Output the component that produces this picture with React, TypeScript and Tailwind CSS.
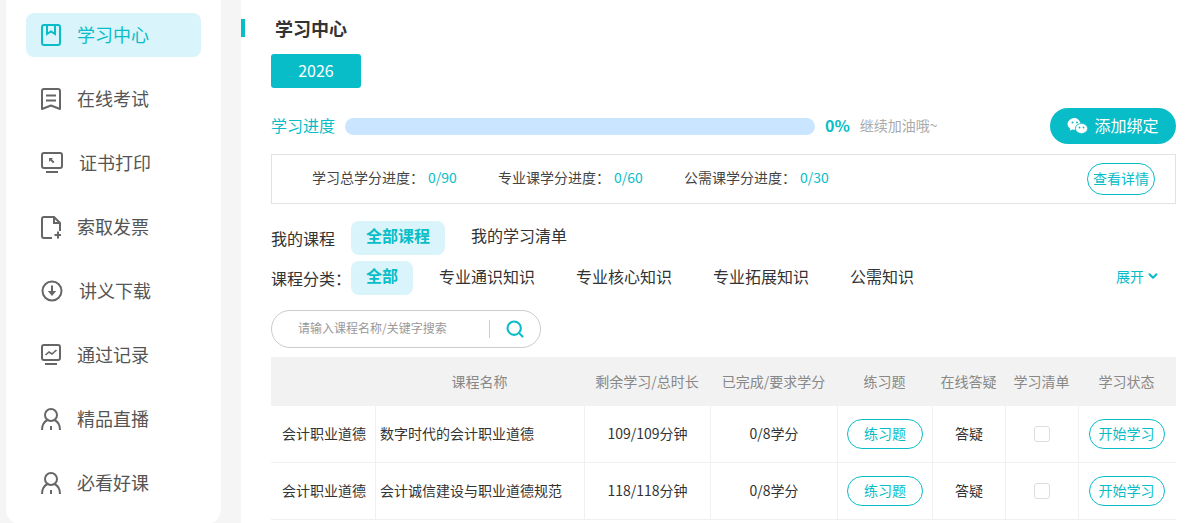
import type { ReactNode } from "react";
import { ChevronDown, Search } from "lucide-react";

const TEAL = "#08bdc8";

function Ico({ w = 20, children, color = "#666" }: { w?: number; children: ReactNode; color?: string }) {
  return (
    <svg width={w} height={24} viewBox={`0 0 ${w} 24`} fill="none" stroke={color} strokeWidth={2} className="shrink-0">
      {children}
    </svg>
  );
}

const person = (
  <Ico>
    <circle cx="10" cy="8" r="6" />
    <path d="M1 23c0-5 2.500-8.500 5.500-10M19 23c0-5-2.500-8.500-5.500-10M10 19v4" />
  </Ico>
);

const menu: { label: string; icon: ReactNode; active?: boolean }[] = [
  {
    label: "学习中心",
    active: true,
    icon: (
      <Ico color={TEAL}>
        <rect x="1" y="2" width="18" height="20" rx="2" />
        <path d="M6 2v9l4-2.500 4 2.500V2" />
      </Ico>
    ),
  },
  {
    label: "在线考试",
    icon: (
      <Ico>
        <path d="M3 2h14a2 2 0 0 1 2 2v18l-9-3.500L1 22V4a2 2 0 0 1 2-2z" strokeLinejoin="round" />
        <path d="M5 8.500h10M5 13.500h10" />
      </Ico>
    ),
  },
  {
    label: "证书打印",
    icon: (
      <Ico w={22}>
        <rect x="1" y="2" width="20" height="15" rx="2" />
        <path d="M5 21h12" />
        <path d="M8 7h4l-1.200 1.200L13.500 11l-1.500 1.300-2.600-2.700L8 11z" fill="#666" stroke="none" />
      </Ico>
    ),
  },
  {
    label: "索取发票",
    icon: (
      <Ico>
        <path d="M11 23H3a2 2 0 0 1-2-2V4a2 2 0 0 1 2-2h10l6 6v8" />
        <path d="M13 2v6h6" />
        <path d="M13.500 20h7M17 16.500v7" />
      </Ico>
    ),
  },
  {
    label: "讲义下载",
    icon: (
      <Ico w={22}>
        <circle cx="11" cy="12" r="9.500" />
        <path d="M11 6.500v7" />
        <path d="M6.800 12h8.400L11 17z" fill="#666" stroke="none" />
      </Ico>
    ),
  },
  {
    label: "通过记录",
    icon: (
      <Ico>
        <rect x="1" y="2" width="18" height="15" rx="2" />
        <path d="M4 21h12" />
        <path d="M4.500 12l3.500-3 3 2 4.500-4" strokeWidth={1.6} />
      </Ico>
    ),
  },
  { label: "精品直播", icon: person },
  { label: "必看好课", icon: person },
];

const credits = [
  { label: "学习总学分进度：", value: "0/90", width: "w-[186px]" },
  { label: "专业课学分进度：", value: "0/60", width: "w-[186px]" },
  { label: "公需课学分进度：", value: "0/30", width: "" },
];

const categories = ["专业通识知识", "专业核心知识", "专业拓展知识", "公需知识"];

const headers = ["", "课程名称", "剩余学习/总时长", "已完成/要求学分", "练习题", "在线答疑", "学习清单", "学习状态"];

const rows = [
  { type: "会计职业道德", name: "数字时代的会计职业道德", time: "109/109分钟", credit: "0/8学分" },
  { type: "会计职业道德", name: "会计诚信建设与职业道德规范", time: "118/118分钟", credit: "0/8学分" },
];

const GRID = "grid grid-cols-[105px_209px_126px_127px_95px_73px_73px_97px]";

function OutlineBtn({ children, className }: { children: ReactNode; className: string }) {
  return (
    <span className={`flex items-center justify-center rounded-full border border-[#08bdc8] text-[#08bdc8] ${className}`}>
      {children}
    </span>
  );
}

function Cell({ children, className = "" }: { children?: ReactNode; className?: string }) {
  return (
    <div className={`flex h-[57px] items-center justify-center border-r border-b border-[#f0f0f0] text-[#333] ${className}`}>
      {children}
    </div>
  );
}

function Sidebar() {
  return (
    <aside className="ml-[6px] flex h-[525px] w-[215px] shrink-0 flex-col gap-5 rounded-b-2xl bg-white pt-[13px] pl-5">
      {menu.map((item) => (
        <div
          key={item.label}
          className={`flex h-11 w-[175px] items-center gap-4 rounded-lg pl-[15px] text-lg ${
            item.active ? "bg-[#d9f4fa] text-[#08bdc8]" : "text-[#555]"
          }`}
        >
          {item.icon}
          <span className="mb-[2px]">{item.label}</span>
        </div>
      ))}
    </aside>
  );
}

export default function App() {
  return (
    <div
      className="flex h-[523px] w-[1202px] gap-5 overflow-hidden bg-[#f5f5f5]"
      style={{ fontFamily: '"Noto Sans CJK SC", "Noto Sans", sans-serif' }}
    >
      <Sidebar />
      <main className="flex-1 bg-white pr-[26px]">
        <div className="flex h-[54px] items-start pt-[19px]">
          <span className="h-[18px] w-1 bg-[#08bdc8]" />
          <h1 className="mt-[-3px] ml-[30px] text-lg leading-6 font-bold text-[#333]">学习中心</h1>
        </div>

        <div className="pl-[30px]">
          <div className="flex h-[34px] w-[90px] items-center justify-center rounded-[3px] bg-[#08bdc8] pb-[2px] text-base text-white">
            2026
          </div>

          <div className="mt-5 flex h-9 items-center">
            <span className="mb-[2px] w-[74px] text-base text-[#08bdc8]">学习进度</span>
            <div className="h-[17px] w-[470px] rounded-full bg-[#c9e5ff]" />
            <span className="mb-[2px] ml-[10px] text-base font-bold text-[#08bdc8]">0%</span>
            <span className="mb-[2px] ml-[10px] text-sm text-[#aaa]">继续加油哦~</span>
            <div className="ml-auto flex h-9 w-[126px] items-center justify-center gap-[6px] rounded-full bg-[#08bdc8] text-base text-white">
              <svg width="21" height="18" viewBox="0 0 21 18" fill="white">
                <path d="M8 1C3.900 1 .6 3.700.6 7c0 1.900 1.100 3.600 2.800 4.700l-.7 2.100 2.500-1.300c.7.200 1.500.3 2.300.3h.5a5.500 5.500 0 0 1 5.700-6.300c-.9-3-3.400-5.500-5.700-5.500z" />
                <ellipse cx="14.500" cy="11.500" rx="6" ry="5" stroke={TEAL} strokeWidth=".6" />
                <circle cx="5.500" cy="5.500" r="1" fill={TEAL} />
                <circle cx="10" cy="5.500" r="1" fill={TEAL} />
                <circle cx="12.500" cy="10.500" r=".9" fill={TEAL} />
                <circle cx="16.500" cy="10.500" r=".9" fill={TEAL} />
              </svg>
              <span className="mb-[2px]">添加绑定</span>
            </div>
          </div>

          <div className="mt-[10px] flex h-[50px] items-center border border-[#e2e2e2] pr-5 pl-10 text-sm text-[#444]">
            {credits.map((c) => (
              <div key={c.label} className={`mb-1 flex ${c.width}`}>
                <span>{c.label}</span>
                <span className="ml-[4px] text-[#08bdc8]">{c.value}</span>
              </div>
            ))}
            <OutlineBtn className="ml-auto h-8 w-[68px] pb-[2px] text-sm">查看详情</OutlineBtn>
          </div>

          <div className="mt-[17px] flex h-[34px] items-center text-base text-[#333]">
            <span className="w-20">我的课程</span>
            <span className="flex h-[34px] w-[94px] items-center justify-center rounded-lg bg-[#d9f4fa] pb-[6px] font-bold text-[#08bdc8]">
              全部课程
            </span>
            <span className="mb-[6px] ml-[26px]">我的学习清单</span>
          </div>

          <div className="mt-[6px] flex h-[34px] items-center text-base text-[#333]">
            <span className="w-20">课程分类：</span>
            <span className="flex h-[34px] w-[62px] items-center justify-center rounded-lg bg-[#d9f4fa] pb-[6px] font-bold text-[#08bdc8]">
              全部
            </span>
            <div className="mb-1 ml-[26px] flex gap-[41px]">
              {categories.map((c) => (
                <span key={c}>{c}</span>
              ))}
            </div>
            <span className="mb-1 ml-auto flex items-center gap-[2px] pr-[16px] text-sm text-[#08bdc8]">
              展开
              <ChevronDown size={14} strokeWidth={3.5} />
            </span>
          </div>

          <div className="mt-[15px] flex h-[38px] w-[270px] items-center rounded-full border border-[#ccc] pl-[26px]">
            <span className="mb-[2px] w-[191px] text-xs text-[#999]">请输入课程名称/关键字搜索</span>
            <span className="h-[18px] w-px bg-[#ccc]" />
            <Search size={20} strokeWidth={2.5} color={TEAL} className="ml-[15px]" />
          </div>

          <div className="mt-[9px] text-sm">
            <div className={`${GRID} h-[49px] items-center bg-[#f2f2f2] text-center text-[#888]`}>
              {headers.map((h, i) => (
                <span key={i} className="mb-[1px] pr-[2px]">
                  {h}
                </span>
              ))}
            </div>
            {rows.map((r) => (
              <div key={r.name} className={GRID}>
                <Cell className="pb-[2px] pl-[2px]">{r.type}</Cell>
                <Cell className="justify-start pb-[2px] pl-1">{r.name}</Cell>
                <Cell className="pb-[2px]">{r.time}</Cell>
                <Cell className="pb-[2px]">{r.credit}</Cell>
                <Cell>
                  <OutlineBtn className="h-[30px] w-[76px] pb-[2px]">练习题</OutlineBtn>
                </Cell>
                <Cell className="pb-[2px]">答疑</Cell>
                <Cell>
                  <span className="h-4 w-4 rounded-[3px] border border-[#ddd]" />
                </Cell>
                <Cell className="border-r-0 pr-[2px]">
                  <OutlineBtn className="h-[30px] w-[76px] pb-[2px]">开始学习</OutlineBtn>
                </Cell>
              </div>
            ))}
          </div>
        </div>
      </main>
    </div>
  );
}
